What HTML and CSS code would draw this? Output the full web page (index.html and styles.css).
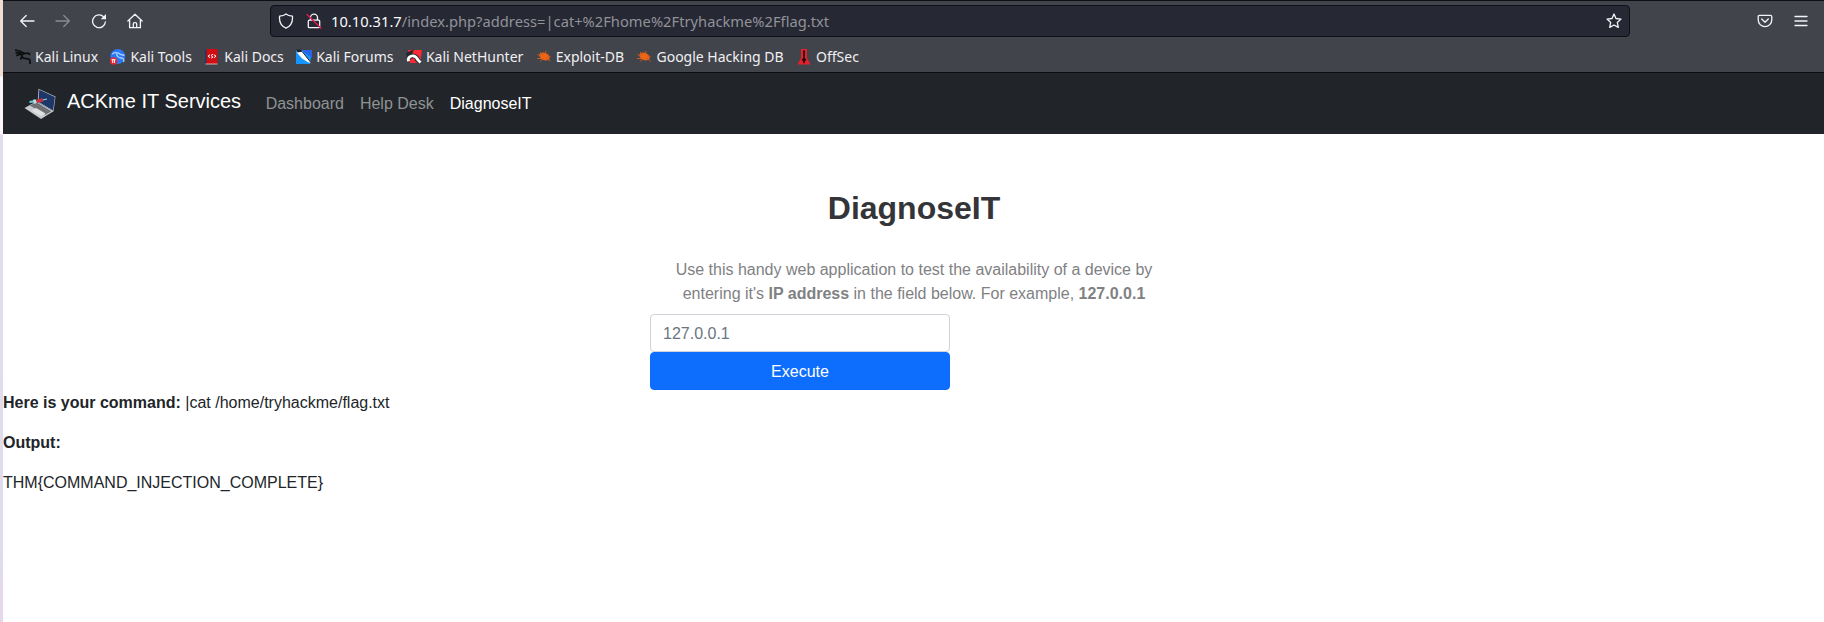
FILE: index.html
```
<!DOCTYPE html>
<html lang="en">
<head>
<meta charset="utf-8">
<title>DiagnoseIT</title>
<link rel="stylesheet" href="styles.css">
</head>
<body>
<div class="desktop">
<div class="window">
  <div class="chrome">
    <div class="toolbar">
      <div class="nav-buttons">
        <svg class="tool-icon" viewBox="0 0 16 16"><path d="M15 8H2M7.200 2.500 1.700 8l5.500 5.500"/></svg>
        <svg class="tool-icon disabled" viewBox="0 0 16 16"><path d="M1 8h13M8.800 2.500 14.300 8l-5.500 5.500"/></svg>
        <svg class="tool-icon" viewBox="0 0 16 16"><path d="M14.400 8.800A6.400 6.400 0 1 1 12.600 3.800L14.400 5.500"/><path class="solid" d="M15 1v5.300H9.700z"/></svg>
        <svg class="tool-icon" viewBox="0 0 16 16"><path d="M.9 8 8 1.200 15.100 8M2.600 7v7.700h10.800V7M6.300 14.500v-3.600q0-1.200 1.200-1.200h1q1.200 0 1.200 1.200v3.600"/></svg>
      </div>
      <div class="urlbar">
        <svg class="url-icon" viewBox="0 0 16 16"><path d="M8 .9C6.500 2.200 4.300 2.900 1.600 3.100 1 8.800 3.300 13.200 8 15.200c4.700-2 7-6.400 6.400-12.100C11.700 2.900 9.500 2.200 8 .9z"/></svg>
        <svg class="url-icon lock" viewBox="0 0 16 16"><path d="M4.500 7.200V4.600a3.500 3.500 0 0 1 7 0v2.600M3.300 7.200h9.400q1 0 1 1v5.500q0 1-1 1H3.300q-1 0-1-1V8.200q0-1 1-1z"/><path class="slash" d="m1 1.500 14 13.800"/></svg>
        <div class="url"><span class="host">10.10.31.7</span>/index.php?address=|cat+%2Fhome%2Ftryhackme%2Fflag.txt</div>
        <svg class="url-icon" viewBox="0 0 16 16"><path d="M8 1l2 4.500 5 .6-3.700 3.300 1 5L8 12l-4.300 2.400 1-5L1 6.100l5-.6z"/></svg>
      </div>
      <div class="menu-buttons">
        <svg class="tool-icon" viewBox="0 0 16 16"><path d="M2.500 2.300h11q1.300 0 1.300 1.300v3.200a6.800 6.800 0 0 1-13.600 0V3.600q0-1.300 1.300-1.300zM4.700 6 8 9.200 11.300 6"/></svg>
        <svg class="tool-icon" viewBox="0 0 16 16"><path d="M2 3.500h12M2 8h12M2 12.500h12"/></svg>
      </div>
    </div>
    <div class="bookmarks">
      <div class="bookmark"><svg viewBox="0 0 16 16"><path fill="none" stroke="#0c0d0f" stroke-width="1.700" d="M0 1.200 5 2.200 10 4.500l3.200-.3 2 1.500M.5 3.800 6 4.200M1.200 6.800 7 4.600M10 4.500Q5.500 5.500 7 7.700t5 2 3 5.300M7 7.500l-1.500 3M12 9.700l3.500.8"/></svg>Kali Linux</div>
      <div class="bookmark"><svg viewBox="0 0 16 16"><circle cx="7.800" cy="7.500" r="7.400" fill="#2b78f5"/><path d="M2 5q5-3 8.500.5l4 1M6.500 4.500Q7 8.500 11 9t2.500 4" fill="none" stroke="#a9d2ff" stroke-width="1.300"/><circle cx="3.500" cy="12" r="3.800" fill="#e02733"/><path d="M1.500 10.700h4M2.700 10.700V14M4.400 10.700V14" stroke="#fff" fill="none"/></svg>Kali Tools</div>
      <div class="bookmark"><svg viewBox="0 0 16 16"><path fill="#1b3765" d="M1 .5h2v14H1z"/><path fill="#d40b12" d="M2.500 0H13.500v15H2.500z"/><path fill="#d8b0a8" d="M1.500 14.500H13.500v1H1.500z"/><path d="m6 5.700-2 1.500 2 1.500M10 5.700l2 1.500-2 1.500M9.200 5.500q-2-.2-1.700 1.200t1.300 1.200-1.600 1.300" stroke="#fff" fill="none"/></svg>Kali Docs</div>
      <div class="bookmark"><svg viewBox="0 0 16 16"><path fill="#1695ff" d="M0 1h16L14 15H0z"/><path fill="#2864ea" d="M5 1h11v8z"/><path fill="#1c2025" d="m0 .5 5 .3 1.500 2L2 4z"/><path fill="#fff" d="m.8 3.600 5.700-.9 4 5.500 5 6-3.400-.9-2.500-1.600-3.600-2.200z"/><path stroke="#222b36" fill="none" d="m6.500 3 4 5 4.800 6"/></svg>Kali Forums</div>
      <div class="bookmark"><svg viewBox="0 0 16 16"><path fill="#fa2938" d="M2 1h14l-2 13H4z"/><path fill="#24272d" d="M0 4 8 .5 6 5 1 8z"/><path fill="none" stroke="#24272d" stroke-width="4.600" d="M2 9.800Q5 6 8.300 7.200t3 3.600l2.700 2.200"/><path fill="none" stroke="#fff" stroke-width="2.800" d="M2.500 12.200Q1.500 8 5.500 7t6.500 4l2.500 2.500"/></svg>Kali NetHunter</div>
      <div class="bookmark"><svg viewBox="0 0 16 16"><ellipse cx="8.500" cy="7.500" rx="5.400" ry="3.500" transform="rotate(25 8.500 7.500)" fill="#ef6516"/><path d="m4 3 3 3m3-4-1 3M1.500 5.500 5 7M1 9.500h4M4.500 12.500l2-3M11 7l3.500.5M10 9l4.500 3" stroke="#c9581d" fill="none"/></svg>Exploit-DB</div>
      <div class="bookmark"><svg viewBox="0 0 16 16"><ellipse cx="8.500" cy="7.500" rx="5.400" ry="3.500" transform="rotate(25 8.500 7.500)" fill="#ef6516"/><path d="m4 3 3 3m3-4-1 3M1.500 5.500 5 7M1 9.500h4M4.500 12.500l2-3M11 7l3.500.5M10 9l4.500 3" stroke="#c9581d" fill="none"/></svg>Google Hacking DB</div>
      <div class="bookmark"><svg viewBox="0 0 16 16"><path fill="#e3202b" d="M5 0h6v9l3.500 6.500h-13L5 9z"/><path fill="#27090c" d="M7 1.500h2l-.2 7.500 1.600 2-1.600 1.200.2 2.300-1-.8-1 .8.200-2.300-1.600-1.200 1.600-2z"/></svg>OffSec</div>
    </div>
  </div>
  <div class="site-nav">
    <svg class="logo" viewBox="0 0 32 32"><path fill="#b9bdc4" d="M14.500.8 31.500 8.500 29.500 23.500 13.700 14z"/><path fill="#1c3768" d="M15.300 1.800 30.900 9 29 22.400 14.500 13.800z"/><path fill="#c7cacf" d="m.5 20 11.700-6.500L29.500 23.300 17 31z"/><path fill="#66686c" d="m6 17.500 6-3.200 15.200 8.900-5.700 3.600z"/><path stroke="#929498" stroke-width=".5" fill="none" d="m8 16.800 15.400 9m-13.200-10.300 15.300 9"/><path fill="#dfe0e2" d="m7.500 22.500 4.500-2.500 9.500 5.500-4.300 2.500z"/><path stroke="#62d3da" stroke-width="2.200" d="m5.500 14 6-.8"/><path stroke="#62d3da" d="m10 11 1.200 5"/><path stroke="#c9dde4" stroke-width="3.600" d="m9.500 13.800 3-.6"/><path stroke="#c8323d" stroke-width="3.400" d="m12.500 13.300 6.500-1.500"/><path stroke="#a4d7df" d="m19 11.900 4-.9"/></svg>
    <div class="brand">ACKme IT Services</div>
    <div class="links"><span>Dashboard</span><span>Help Desk</span><span class="active">DiagnoseIT</span></div>
  </div>
  <main class="page">
    <h1>DiagnoseIT</h1>
    <div class="form-area">
      <p class="lead">Use this handy web application to test the availability of a device by<br>entering it's <b>IP address</b> in the field below. For example, <b>127.0.0.1</b></p>
      <form class="form"><input class="address" type="text" placeholder="127.0.0.1"><button class="execute" type="button">Execute</button></form>
    </div>
    <div class="result">
      <p><b>Here is your command:</b> |cat /home/tryhackme/flag.txt</p>
      <p><b>Output:</b></p>
      <p>THM{COMMAND_INJECTION_COMPLETE}</p>
    </div>
  </main>
</div>
</div>
</body>
</html>
```
FILE: styles.css
```
* { box-sizing: border-box; }
body { margin: 0; overflow: hidden; font: 16px/24px "Liberation Sans", Arial, sans-serif; color: #212529; }
.desktop { height: 622px; padding-left: 3px; background: linear-gradient(#f2ddd0 0 76px, #faf6fa 77px 134px, #e2dcf0 135px, #dfdcee 550px, #e6d7ea 622px); }
.window { width: 1822px; height: 622px; background: #fff; }
.chrome { height: 73px; background: #42444c; border-top: 1px solid #0e0f13; border-bottom: 1px solid #0c0d11; font-family: "Noto Sans", sans-serif; color: #f0f0f2; }
.toolbar { height: 40px; display: flex; align-items: center; padding-right: 16px; }
.nav-buttons { display: flex; gap: 20px; width: 267px; padding-left: 16px; }
.tool-icon, .url-icon { width: 16px; height: 16px; flex: none; fill: none; stroke: #f4f4f6; stroke-width: 1.300; stroke-linecap: round; stroke-linejoin: round; }
.tool-icon .solid { fill: #f4f4f6; stroke: none; }
.disabled { opacity: .4; }
.urlbar { width: 1360px; height: 32px; display: flex; align-items: center; padding: 0 7px; border: 1px solid #0f1016; border-radius: 4px; background: #262834; }
.lock { margin-left: 12px; }
.lock .slash { stroke: #e6194a; }
.url { flex: 1; margin-left: 9px; font-size: 14.670px; letter-spacing: .03px; color: #929299; white-space: nowrap; }
.host { color: #fbfbfe; }
.menu-buttons { display: flex; gap: 20px; margin-left: auto; }
.bookmarks { display: flex; gap: 12.400px; height: 31px; align-items: center; padding-left: 12px; font-size: 14px; }
.bookmark { display: flex; align-items: center; gap: 4px; white-space: nowrap; }
.bookmark svg { width: 16px; height: 16px; flex: none; }
.site-nav { height: 61px; display: flex; align-items: center; background: #212529; padding-left: 21px; }
.logo { width: 32px; height: 32px; margin-right: 11px; }
.brand { font-size: 20px; line-height: 30px; color: #fff; padding-bottom: 5px; }
.links { display: flex; gap: 16px; margin-left: 24.500px; color: #909294; }
.active { color: #fff; }
h1 { margin: 0; padding-top: 47px; font-size: 32px; line-height: 54px; text-align: center; color: #333538; }
.form-area { width: 528px; margin: 23px auto 0; }
.lead { margin: 0; text-align: center; color: #7f8183; white-space: nowrap; }
.form { width: 300px; margin-top: 8px; padding-bottom: 1px; display: flex; flex-direction: column; }
.address, .execute { width: 300px; height: 38px; font: inherit; border-radius: 4px; padding: 7px 12px 5px; }
.address { border: 1px solid #ced4da; background: #fff; }
.address::placeholder { color: #6c757d; opacity: 1; }
.execute { border: 1px solid #0d6efd; background: #0d6efd; color: #fff; }
.result p { margin: 0 0 16px; }
```
